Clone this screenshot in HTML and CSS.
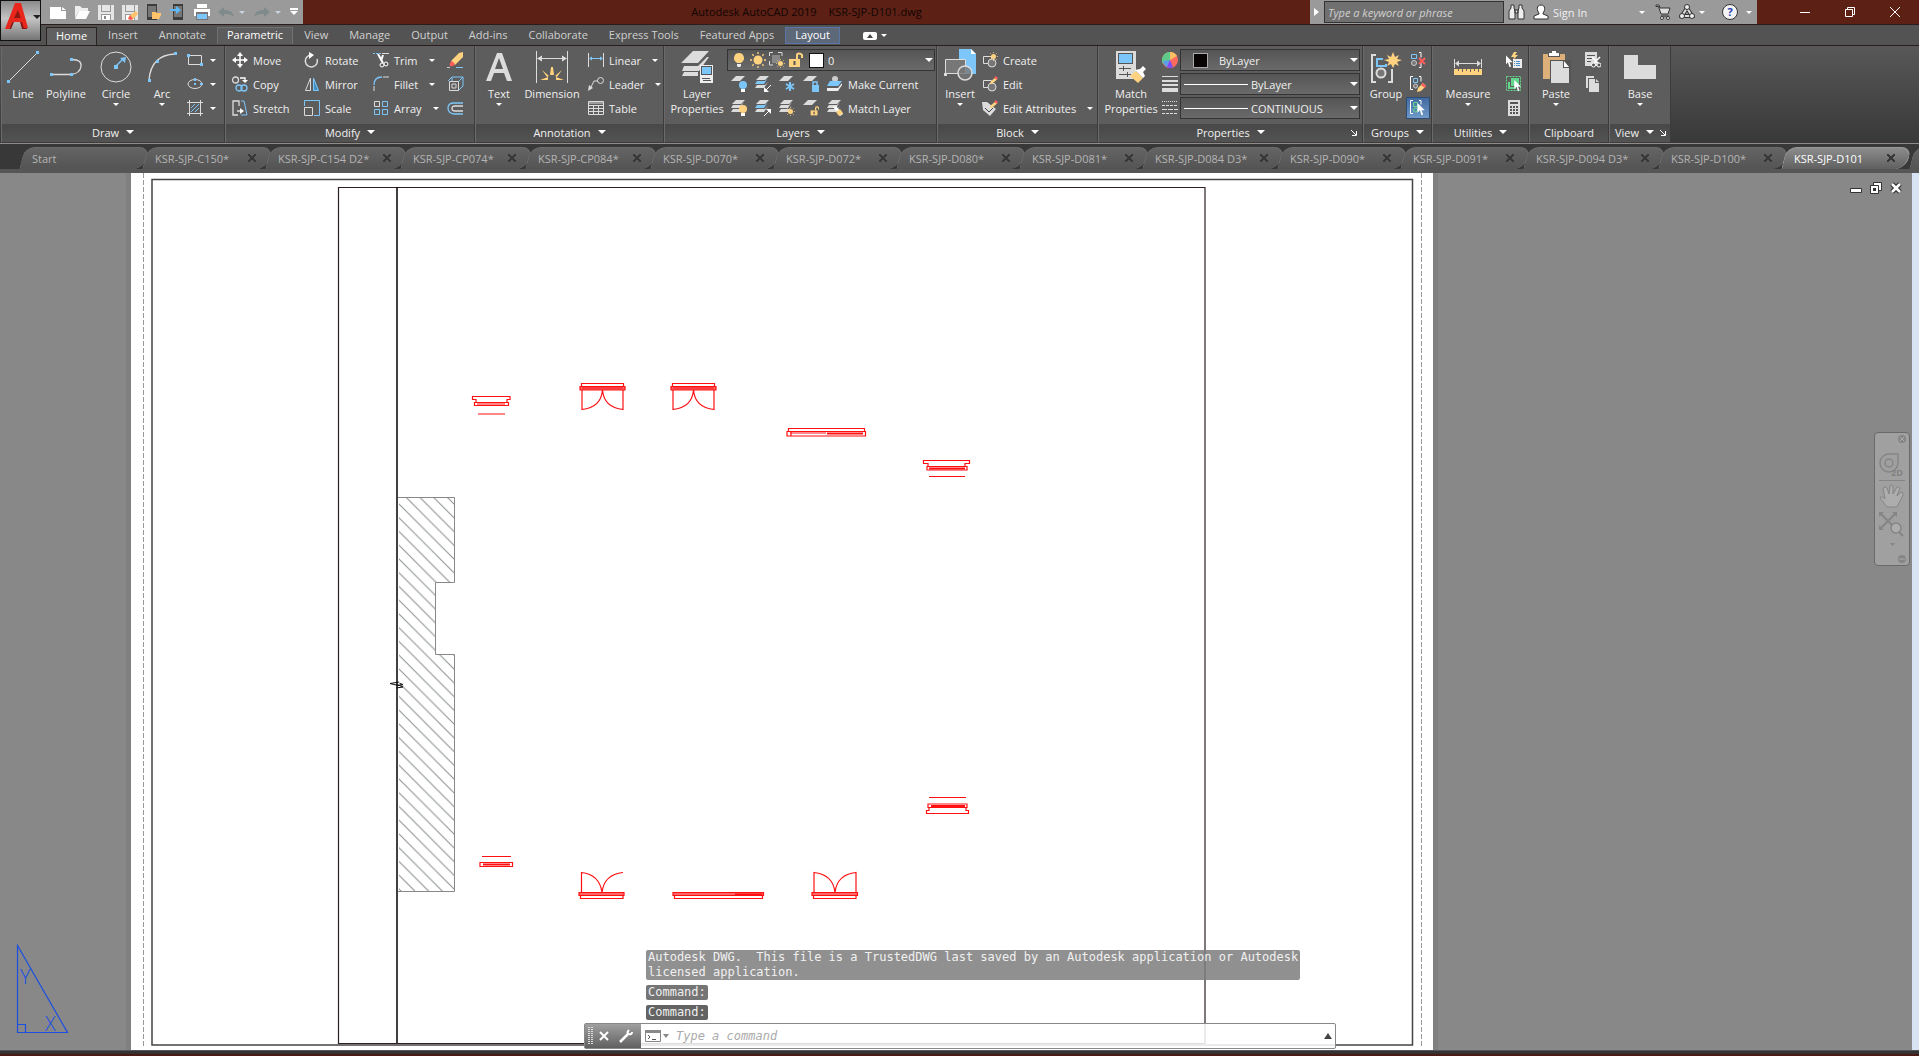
FILE: index.html
```html
<!DOCTYPE html>
<html lang="en">
<head>
  <meta charset="UTF-8">
  <title>Autodesk AutoCAD 2019 - KSR-SJP-D101.dwg</title>
  <meta name="viewport" content="width=device-width, initial-scale=1">
  <link rel="stylesheet" href="styles.css">
</head>
<body>
  <!-- shared icon parts -->
  <svg class="defs" aria-hidden="true">
    <symbol id="sheet" viewBox="0 0 16 16"><path fill="#dcdcdc" d="M5 1h9l-5 5H0z"/></symbol>
    <symbol id="stack" viewBox="0 0 16 16"><path fill="#dcdcdc" d="M5 0h9l-4 4H1zM2 5h8l3-3-4 6H0zM2 9h8l3-3-4 6H0z"/></symbol>
    <symbol id="stack-blue" viewBox="0 0 16 16"><path fill="#dcdcdc" d="M5 0h9l-4 4H1zM2 9h8l3-3-4 6H0z"/><path fill="#7cc6fa" d="M2 5h8l3-3-4 6H0z"/></symbol>
    <symbol id="sun" viewBox="0 0 16 16"><circle cx="8" cy="8" r="4.500" fill="#ffd27f"/><path stroke="#ffd27f" stroke-width="1.300" d="M8 0v2M8 14v2M0 8h2M14 8h2M2.300 2.300l1.400 1.400M12.300 12.300l1.400 1.400M2.300 13.700l1.400-1.400M12.300 3.700l1.400-1.400"/></symbol>
    <symbol id="bulb" viewBox="0 0 16 16"><path fill="#ffd27f" d="M8 1a5 5 0 0 1 3 9l-1 1H6l-1-1a5 5 0 0 1 3-9z"/><path fill="#eee" d="M6 12h4v2l-1 1H7l-1-1z"/></symbol>
    <symbol id="lock" viewBox="0 0 16 16"><path fill="#ffd27f" d="M1 7h11v8H1z"/><path fill="none" stroke="#ffd27f" stroke-width="2" d="M9 7V3q0-1.500 2-1.500T14 3v3"/><path fill="#555" d="M5.500 9h2v4h-2z"/></symbol>
    <symbol id="pencil" viewBox="0 0 16 16"><path fill="#ffd27f" d="M12 2l3 3-8 7-4 1 1-4z"/><path fill="#ff5c5c" d="M12 0l4 3-2 3-4-3z"/></symbol>
    <symbol id="cursor" viewBox="0 0 16 16"><path fill="#fff" d="M3 0v12l3-3 2 6 2-1-2-5h4z"/></symbol>
  </svg>

  <header class="titlebar">
    <button class="app-menu" aria-label="Application menu">
      <svg width="26" height="28" viewBox="0 0 26 28"><path fill="#8d1610" d="M4 26L14 2l8 24h-5l-2-7H9l-3 7z"/><path fill="#e8261c" d="M0 26L10 0h6l7 25h-4L13 7 9 15h7l1 4H7l-3 7z"/></svg>
      <span class="caret dark"></span>
    </button>
    <div class="quick">
      <button aria-label="New"><svg width="16" height="16"><path fill="#fff" d="M0 3h11v4h5v8H0zM12 3l4 3h-4z"/></svg></button>
      <button aria-label="Open"><svg width="16" height="16"><path fill="#eee" d="M1 14V2h5l2 2h6v3H5z"/><path fill="#fff" d="M5 7h11l-4 8H1z"/></svg></button>
      <button aria-label="Save"><svg width="16" height="16"><path fill="#e6e6e6" d="M0 1h16v15H0z"/><path fill="#999" d="M3 1h1v6h8V1h1v7H3zM3 10h10v6H3z"/><path fill="#fff" d="M4 11h8v5H4z"/><path fill="#888" d="M6 12h2v3H6z"/></svg></button>
      <button aria-label="Save As"><svg width="16" height="16"><path fill="#e6e6e6" d="M0 1h16v15H0z"/><path fill="#999" d="M3 1h1v6h8V1h1v7H3zM3 10h10v6H3z"/><path fill="#fff" d="M4 11h8v5H4z"/><path fill="#ffc46b" d="M14 7l2 3-6 6-4-1 1-3z"/><path fill="#f55" d="M8 11l3 4-2 1-3-1z"/></svg></button>
      <button aria-label="Open from mobile"><svg width="16" height="16"><path fill="#3c3c3c" d="M1 0h10v16H1z"/><path fill="#777" d="M2 2h8v11H2z"/><path fill="#ffc46b" d="M6 8h4l1 1h4v2l-2 4H6z"/></svg></button>
      <button aria-label="Save to mobile"><svg width="16" height="16"><path fill="#3c3c3c" d="M3 0h10v16H3z"/><path fill="#777" d="M4 2h8v11H4z"/><path fill="#5fb8f7" d="M0 5h6V2l5 4-5 4V7H0z"/></svg></button>
      <button aria-label="Plot"><svg width="16" height="16"><path fill="#fff" d="M3 0h10v4H3zM0 5h16v7H0z"/><path fill="#777" d="M2 8h12v8H2z"/><path fill="#7cc6fa" d="M3 10h10v5H3z"/></svg></button>
      <button aria-label="Undo"><svg width="16" height="16"><path fill="#7f8b8b" d="M0 8l6-5v3c6 0 9 2 10 7-3-3-6-3-10-3v3z"/></svg></button>
      <button class="slim" aria-label="Undo list"><span class="caret faint"></span></button>
      <button aria-label="Redo"><svg width="16" height="16"><path fill="#7f8b8b" d="M16 8l-6-5v3C4 6 1 8 0 13c3-3 6-3 10-3v3z"/></svg></button>
      <button class="slim" aria-label="Redo list"><span class="caret faint"></span></button>
      <button aria-label="Customize"><svg width="8" height="8"><path fill="#fff" d="M0 0h8v2H0zM0 3h8L4 7z"/></svg></button>
    </div>
    <div class="title"><span>Autodesk AutoCAD 2019</span><span>KSR-SJP-D101.dwg</span></div>
    <div class="infocenter">
      <button class="expand" aria-label="Collapse"><svg width="5" height="8"><path fill="#fff" d="M0 0l5 4-5 4z"/></svg></button>
      <input type="text" placeholder="Type a keyword or phrase" aria-label="Search">
      <button aria-label="Find"><svg width="17" height="16"><path fill="#eee" stroke="#333" d="M3 1h3v3l1 3v8H1V7l2-3zM11 1h3v3l2 3v8h-6V7l1-3zM7 6h3v3H7z"/></svg></button>
      <button class="signin"><svg width="16" height="16"><path fill="#fff" stroke="#333" d="M8 1c5 0 4 6 2 8v1l5 2v3H1v-3l5-2V9C4 7 3 1 8 1z"/></svg>Sign In<span class="caret"></span></button>
      <button aria-label="App store"><svg width="16" height="16"><path fill="#ddd" stroke="#333" d="M1 1h3l1 3h10l-2 6H6L3.500 2.500H1zM6 12h8"/><circle cx="7" cy="14" r="1.500" fill="#fff" stroke="#333"/><circle cx="13" cy="14" r="1.500" fill="#fff" stroke="#333"/></svg></button>
      <button class="pair" aria-label="Stay connected"><svg width="16" height="16"><path fill="none" stroke="#333" stroke-width="4" d="M8 4l5 8H3z"/><path fill="none" stroke="#ddd" stroke-width="2" d="M8 4l5 8H3z"/><g fill="#eee" stroke="#333"><circle cx="8" cy="3" r="2.500"/><circle cx="3" cy="12" r="2.500"/><circle cx="13" cy="12" r="2.500"/></g></svg><span class="caret"></span></button>
      <button class="pair help" aria-label="Help"><span class="help-mark">?</span><span class="caret"></span></button>
    </div>
    <div class="window-buttons">
      <button aria-label="Minimize"><svg width="10" height="10"><path stroke="#fff" d="M0 5.500h10"/></svg></button>
      <button aria-label="Restore"><svg width="10" height="10"><path fill="none" stroke="#fff" d="M.5 2.500h7v7h-7zM2.500 2V.500h7v7H8"/></svg></button>
      <button aria-label="Close"><svg width="10" height="10"><path stroke="#fff" d="M0 0l10 10M10 0L0 10"/></svg></button>
    </div>
  </header>

  <nav class="menu">
    <button class="menu-tab current">Home</button>
    <button class="menu-tab">Insert</button>
    <button class="menu-tab">Annotate</button>
    <button class="menu-tab outlined">Parametric</button>
    <button class="menu-tab">View</button>
    <button class="menu-tab">Manage</button>
    <button class="menu-tab">Output</button>
    <button class="menu-tab">Add-ins</button>
    <button class="menu-tab">Collaborate</button>
    <button class="menu-tab">Express Tools</button>
    <button class="menu-tab">Featured Apps</button>
    <button class="menu-tab context">Layout</button>
    <button class="ribbon-toggle" aria-label="Minimize ribbon"><svg width="14" height="8"><rect width="14" height="8" rx="2" fill="#fff"/><path fill="#444" d="M4 6l3-4 3 4z"/></svg><span class="caret"></span></button>
  </nav>

  <section class="ribbon">
    <div class="panel draw">
      <div class="panel-body">
        <button class="big"><svg width="32" height="32"><path stroke="#dcdcdc" d="M2 30L30 2"/><path fill="#7cc6fa" d="M0 29h3v3H0zM29 0h3v3h-3z"/></svg>Line</button>
        <button class="big"><svg width="32" height="32"><path fill="none" stroke="#dcdcdc" stroke-width="1.300" d="M2 23.500h19q9-1 10-8t-9-7"/><path fill="#7cc6fa" d="M0 22h3v3H0zM20 22h3v3h-3zM20 7h3v3h-3z"/></svg>Polyline</button>
        <button class="big wide"><svg width="32" height="32"><circle cx="16" cy="16" r="15" fill="none" stroke="#dcdcdc"/><path stroke="#7cc6fa" stroke-width="1.500" d="M16 15l8-8"/><path fill="#7cc6fa" d="M14 14h4v4h-4zM20 7l6-1-1 6z"/></svg>Circle<span class="caret"></span></button>
        <button class="big narrow"><svg width="32" height="32"><path fill="none" stroke="#dcdcdc" stroke-width="1.300" d="M3 29Q5 4 29 3"/><path fill="#7cc6fa" d="M2 28h3v3H2zM10 9h3v3h-3zM28 1h3v3h-3z"/></svg>Arc<span class="caret"></span></button>
        <div class="rows draw-more">
          <button class="tool" aria-label="Rectangle"><svg width="16" height="16"><path fill="none" stroke="#dcdcdc" d="M1.500 3.500h13v9h-13z"/><path fill="#7cc6fa" d="M0 2h3v3H0zM13 11h3v3h-3z"/></svg><span class="caret"></span></button>
          <button class="tool" aria-label="Ellipse"><svg width="16" height="16"><ellipse cx="8" cy="8" rx="7" ry="4.500" fill="none" stroke="#dcdcdc"/><path fill="#7cc6fa" d="M7 2h2v3H7zM13 7h3v2h-3zM7 7h2v2H7z"/></svg><span class="caret"></span></button>
          <button class="tool" aria-label="Hatch"><svg width="16" height="16"><path stroke="#dcdcdc" d="M2.500 0v16M13.500 0v16M0 2.500h16M0 13.500h16"/><path stroke="#7cc6fa" d="M4 8l4-4M4 12l8-8M8 12l4-4"/></svg><span class="caret"></span></button>
        </div>
      </div>
      <button class="panel-title">Draw<span class="caret large"></span></button>
    </div>

    <div class="panel modify">
      <div class="panel-body">
        <div class="rows col-a">
          <button class="tool"><svg width="16" height="16"><path stroke="#fff" stroke-width="1.500" d="M8 2v12M2 8h12"/><path fill="#fff" d="M8 0l3 4H5zM8 16l3-4H5zM0 8l4-3v6zM16 8l-4-3v6z"/></svg>Move</button>
          <button class="tool"><svg width="16" height="16"><g fill="none" stroke-width="1.300"><circle cx="3.500" cy="4" r="3" stroke="#dcdcdc"/><circle cx="7" cy="12" r="3" stroke="#7cc6fa"/><circle cx="12" cy="12" r="3" stroke="#7cc6fa"/><path stroke="#fff" d="M8 2h5v3"/></g><path fill="#fff" d="M10 4h6l-3 3z"/></svg>Copy</button>
          <button class="tool"><svg width="16" height="16"><path fill="none" stroke="#dcdcdc" stroke-width="1.300" d="M6 15H1V1h6v5M5 11h5"/><path fill="#fff" d="M8 8l4 3-4 3z"/><path fill="none" stroke="#7cc6fa" d="M9 1h3l3 14H9"/></svg>Stretch</button>
        </div>
        <div class="rows col-b">
          <button class="tool"><svg width="16" height="16"><path fill="none" stroke="#dcdcdc" stroke-width="1.500" d="M7 3a6 6 0 1 0 6 4"/><path fill="#fff" d="M5 0l5 3-5 4z"/></svg>Rotate</button>
          <button class="tool"><svg width="16" height="16"><path fill="none" stroke="#dcdcdc" d="M6.500 2v12.500h-5z"/><path fill="#4790c2" stroke="#7cc6fa" d="M9.500 2v12.500h5z"/></svg>Mirror</button>
          <button class="tool"><svg width="16" height="16"><path fill="none" stroke="#7cc6fa" d="M.5 6V.500h15v15H10"/><path fill="none" stroke="#dcdcdc" d="M.5 7.500h8v8h-8z"/></svg>Scale</button>
        </div>
        <div class="rows col-c">
          <button class="tool"><svg width="16" height="16"><path stroke="#7cc6fa" stroke-dasharray="2 1" d="M0 1.500h8"/><path stroke="#dcdcdc" d="M9 1.500h7"/><path stroke="#fff" stroke-width="2" d="M5 2l5 9M10 3L8 9"/><g fill="none" stroke="#fff"><circle cx="9" cy="13" r="2"/><circle cx="13" cy="12" r="2"/></g></svg>Trim<span class="caret"></span></button>
          <button class="tool"><svg width="16" height="16"><path fill="none" stroke="#7cc6fa" stroke-width="1.300" d="M1 9q0-8 8-8"/><path stroke="#dcdcdc" d="M1 10v5M10 1h6"/></svg>Fillet<span class="caret"></span></button>
          <button class="tool"><svg width="16" height="16"><g fill="none" stroke="#7cc6fa"><path stroke="#dcdcdc" d="M1.500 1.500h5v5h-5z"/><path d="M9.500 1.500h5v5h-5zM1.500 9.500h5v5h-5zM9.500 9.500h5v5h-5z"/></g></svg>Array<span class="caret"></span></button>
        </div>
        <div class="rows">
          <button class="tool" aria-label="Erase"><svg width="17" height="16"><path fill="#ffd27f" d="M12 1l4-1v5L8 13l-4-4z"/><path fill="#ff5c5c" d="M5 9l3 3q-2 3-5 2-1-3 2-5z"/><path stroke="#7cc6fa" d="M9 15.500h7"/><path stroke="#ccc" d="M0 15.500h3"/></svg></button>
          <button class="tool" aria-label="Explode"><svg width="17" height="16"><path fill="none" stroke="#7cc6fa" d="M1 5l4-4h11v9l-4 4M12 5l4-4M5 1v4"/><path fill="none" stroke="#dcdcdc" d="M2.500 5.500h9v9h-9zM5 8h4v4H5z"/></svg></button>
          <button class="tool" aria-label="Offset"><svg width="17" height="16"><path fill="none" stroke="#7cc6fa" stroke-width="1.300" d="M16 3H7q-6 0-6 5t6 6h9"/><path fill="none" stroke="#dcdcdc" stroke-width="1.300" d="M16 6H8Q5 6 5 8.500T8 11h8"/></svg></button>
        </div>
      </div>
      <button class="panel-title">Modify<span class="caret large"></span></button>
    </div>

    <div class="panel annotation">
      <div class="panel-body">
        <button class="big"><svg width="32" height="32"><path fill="#dcdcdc" d="M14 2h5l10 28h-5l-3-8H11l-3 8H3zM12 18h8L16 7z"/></svg>Text<span class="caret"></span></button>
        <button class="big wide"><svg width="32" height="32"><path stroke="#dcdcdc" d="M.5 0v32M31.500 0v32M3 7.500h26"/><path fill="#dcdcdc" d="M1 7.500l5-3v6zM31 7.500l-5-3v6z"/><path fill="#ffd27f" d="M15 16h2l1 8h-4zM6 19l7 6-2 1zM26 19l-7 6 2 1zM4 29l8-3v3zM28 29l-8-3v3z"/></svg>Dimension</button>
        <div class="rows col-a">
          <button class="tool"><svg width="16" height="16"><path stroke="#dcdcdc" d="M.5 1v14M15.500 1v14"/><path stroke="#7cc6fa" d="M2 6.500h12"/><path fill="#7cc6fa" d="M1 6.500l3-2v4zM15 6.500l-3-2v4z"/></svg>Linear<span class="caret"></span></button>
          <button class="tool"><svg width="16" height="16"><path fill="none" stroke="#dcdcdc" d="M2 13l4-8h4"/><circle cx="12.500" cy="4.500" r="3" fill="none" stroke="#dcdcdc"/><path fill="#dcdcdc" d="M0 15l1-6 4 3z"/></svg>Leader<span class="caret"></span></button>
          <button class="tool"><svg width="16" height="16"><path fill="none" stroke="#dcdcdc" d="M.5 1.500h15v13H.500zM1 3h14M1 5.500h14M1 8.500h14M1 11.500h14M5.500 5v9M10.500 5v9"/></svg>Table</button>
        </div>
      </div>
      <button class="panel-title">Annotation<span class="caret large"></span></button>
    </div>

    <div class="panel layers">
      <div class="panel-body">
        <button class="big wide"><svg width="32" height="32"><path fill="#dcdcdc" d="M12 0h16L17 12H0zM3 15h14l9-9h2L18 20H1zM3 21h14v4H1z"/><path fill="#eee" d="M19 14h13v18H19z"/><path fill="#555" d="M20 15h11v9H20z"/><path fill="#7cc6fa" d="M21 16h9v7h-9z"/><path stroke="#555" d="M21 27.500h8M22 29.500h8"/></svg>Layer<br>Properties</button>
        <div class="rows">
          <div class="combo layer-combo">
            <select aria-label="Layer"><option>0</option></select>
            <div class="combo-icons">
              <svg width="16" height="16"><use href="#bulb"/></svg>
              <svg width="16" height="16"><use href="#sun"/></svg>
              <svg width="16" height="16"><path fill="none" stroke="#dcdcdc" d="M.5 4V.500H4M9 .5h4V4M.5 9v4H4"/><path fill="#888" d="M3 3h8v8H3z"/><use href="#sun" x="7" y="7" width="9" height="9"/></svg>
              <svg width="16" height="16"><use href="#lock"/></svg>
              <i class="swatch white"></i>
            </div>
          </div>
          <div class="icon-row">
            <button class="tool" aria-label="Layer off"><svg width="16" height="16"><use href="#sheet" y="-1"/><circle cx="12" cy="9" r="4" fill="#7cc6fa"/><path fill="#fff" d="M10 13h4v3h-4z"/></svg></button>
            <button class="tool" aria-label="Layer isolate"><svg width="16" height="16"><use href="#stack-blue"/><path stroke="#fff" d="M16 9l-5 5"/><path fill="#fff" d="M9 16v-5l5 5z"/></svg></button>
            <button class="tool" aria-label="Layer freeze"><svg width="16" height="16"><use href="#sheet" y="-1"/><path stroke="#7cc6fa" stroke-width="2" d="M11 6v9M7 8l8 5M15 8l-8 5"/></svg></button>
            <button class="tool" aria-label="Layer lock"><svg width="16" height="16"><use href="#sheet" y="-1"/><path fill="#7cc6fa" d="M9 9h7v7H9z"/><path fill="none" stroke="#7cc6fa" stroke-width="1.500" d="M10 9V6h4v3"/></svg></button>
            <button class="tool"><svg width="16" height="16"><circle cx="8" cy="3" r="3" fill="#ccc"/><path fill="#7cc6fa" d="M3 5h12l-4 5H0z"/><path fill="#eee" d="M0 12h11l4-5v2l-4 6H0z"/></svg>Make Current</button>
          </div>
          <div class="icon-row">
            <button class="tool" aria-label="Layers on"><svg width="16" height="16"><use href="#stack"/><circle cx="12" cy="9" r="4" fill="#ffd27f"/><path fill="#fff" d="M10 13h4v3h-4z"/></svg></button>
            <button class="tool" aria-label="Layer unisolate"><svg width="16" height="16"><use href="#stack-blue"/><path stroke="#fff" d="M9 16l5-5"/><path fill="#fff" d="M16 9v5l-5-5z"/></svg></button>
            <button class="tool" aria-label="Layers thaw"><svg width="16" height="16"><use href="#stack"/><use href="#sun" x="7" y="7" width="9" height="9"/></svg></button>
            <button class="tool" aria-label="Layer unlock"><svg width="16" height="16"><use href="#sheet" y="-1"/><use href="#lock" x="7" y="6" width="10" height="10"/></svg></button>
            <button class="tool"><svg width="16" height="16"><use href="#stack"/><path fill="#fff" d="M6 7l3-1 7 8-3 2z"/><path fill="#ffd27f" d="M9 12l4-3 3 4-4 3z"/></svg>Match Layer</button>
          </div>
        </div>
      </div>
      <button class="panel-title">Layers<span class="caret large"></span></button>
    </div>

    <div class="panel block">
      <div class="panel-body">
        <button class="big"><svg width="32" height="32"><path fill="#7cc6fa" d="M15-2h12l5 5v20H15z"/><path fill="#fff" d="M27-2l5 5h-5z"/><path fill="#777" stroke="#dcdcdc" d="M1.500 8.500h20v14h-20z"/><circle cx="21" cy="22" r="7" fill="#777" fill-opacity=".8" stroke="#dcdcdc" stroke-width="1.500"/><path fill="#dcdcdc" d="M0 22h3v3H0z"/></svg>Insert<span class="caret"></span></button>
        <div class="rows col-a">
          <button class="tool"><svg width="16" height="16"><path fill="none" stroke="#dcdcdc" d="M1.500 4.500h8v7h-8z"/><circle cx="10" cy="11" r="4" fill="#777" stroke="#dcdcdc"/><use href="#sun" x="7" y="0" width="9" height="9"/></svg>Create</button>
          <button class="tool"><svg width="16" height="16"><path fill="none" stroke="#dcdcdc" d="M1.500 4.500h8v7h-8z"/><circle cx="10" cy="11" r="4" fill="#777" stroke="#dcdcdc"/><use href="#pencil" x="6" y="0" width="10" height="10"/></svg>Edit</button>
          <button class="tool"><svg width="16" height="16"><path fill="#dcdcdc" d="M0 2h5l9 7-6 7-7-6z"/><path fill="none" stroke="#444" d="M3 8l4 4 4-4"/><use href="#pencil" x="6" y="0" width="10" height="10"/></svg>Edit Attributes<span class="caret"></span></button>
        </div>
      </div>
      <button class="panel-title">Block<span class="caret large"></span></button>
    </div>

    <div class="panel properties">
      <div class="panel-body">
        <button class="big wide"><svg width="32" height="32"><path fill="#dcdcdc" d="M1 0h20v28H1z"/><path fill="#555" d="M3 2h15v11H3z"/><path fill="#7cc6fa" d="M4 3h13v9H4z"/><path stroke="#555" d="M4 17.500h12M4 23.500h12M8.500 15v5M12.500 21v5"/><path fill="#ffd27f" d="M15 25l6-5 7 7-5 5z"/><path fill="#fff" d="M20 19l5-1 3-3 3 3-3 3 2 4-2 2z"/></svg>Match<br>Properties</button>
        <div class="rows prop-icons">
          <svg width="16" height="16"><circle cx="8" cy="8" r="8" fill="#ff6b5e"/><path fill="#f5c164" d="M8 8V0a8 8 0 0 1 7 4z"/><path fill="#5fc98a" d="M8 8L1 12A8 8 0 0 1 8 0z"/><path fill="#5c9fe8" d="M8 8l-7 1q1 5 4 6z"/><path fill="#7a4dff" d="M8 8l-3 7q3 2 6 0z"/></svg>
          <svg width="16" height="16"><path fill="#dcdcdc" d="M0 0h16v1H0zM0 4h16v2H0zM0 8h16v2H0zM0 12h16v4H0z"/></svg>
          <svg width="16" height="16"><path stroke="#dcdcdc" stroke-dasharray="1 1" d="M0 1.500h16"/><path stroke="#dcdcdc" stroke-dasharray="3 1" d="M0 5.500h16M0 13.500h16"/><path stroke="#dcdcdc" stroke-dasharray="5 1" d="M0 9.500h16"/></svg>
        </div>
        <div class="rows prop-combos">
          <div class="combo color"><select aria-label="Object color"><option>ByLayer</option></select><div class="combo-icons"><i class="swatch black"></i></div></div>
          <div class="combo"><select aria-label="Lineweight"><option>ByLayer</option></select><div class="combo-icons"><i class="stroke"></i></div></div>
          <div class="combo"><select aria-label="Linetype"><option>CONTINUOUS</option></select><div class="combo-icons"><i class="stroke"></i></div></div>
        </div>
      </div>
      <button class="panel-title">Properties<span class="caret large"></span><svg class="launcher" width="6" height="6"><path fill="none" stroke="#fff" d="M0 0l5 5M5.500 1v4.500H1"/></svg></button>
    </div>

    <div class="panel groups">
      <div class="panel-body">
        <button class="big"><svg width="32" height="32"><path fill="none" stroke="#dcdcdc" stroke-width="2" d="M6 4H2v27h4M18 31h4V18"/><circle cx="11" cy="22" r="4.500" fill="#777" stroke="#dcdcdc" stroke-width="2"/><path fill="none" stroke="#7cc6fa" stroke-width="2" d="M13 8H7v7h9v-2"/><path fill="#ffd27f" d="M23 1l2 5 4-2-2 4 5 1-5 2 2 4-4-2-2 4-2-4-4 2 2-4-5-2 5-1-2-4 4 2z"/></svg>Group</button>
        <div class="rows">
          <button class="tool" aria-label="Ungroup"><svg width="16" height="16"><path fill="none" stroke="#fff" d="M9 .5h2v5M9 15.500h2V11"/><path fill="none" stroke="#7cc6fa" d="M1.500 2.500h5v4h-5z"/><circle cx="4" cy="11" r="2.500" fill="#777" stroke="#ccc"/><path stroke="#ff5c5c" stroke-width="2" d="M9 6l6 6M15 6l-6 6"/></svg></button>
          <button class="tool" aria-label="Group edit"><svg width="16" height="16"><path fill="none" stroke="#fff" d="M3 .5H.500v13H3M9 .5h2v5"/><path fill="none" stroke="#7cc6fa" d="M3.500 2.500h4v4h-4z"/><circle cx="5.500" cy="10" r="2" fill="#777" stroke="#ccc"/><path fill="#ffd27f" d="M13 7l3 3-5 5-4 1 1-4z"/><path fill="#ff5c5c" d="M13 7l3 3-1 2-4-3z"/></svg></button>
          <button class="tool pressed" aria-label="Group selection"><svg width="16" height="16"><path fill="none" stroke="#fff" d="M3 .5H.500v13H3M9 .5h2v4"/><path fill="none" stroke="#65d68d" d="M3.500 2.500h4v4h-4z"/><circle cx="5.500" cy="10" r="2" fill="none" stroke="#65d68d"/><use href="#cursor" x="5" y="3" width="13" height="13"/></svg></button>
        </div>
      </div>
      <button class="panel-title">Groups<span class="caret large"></span></button>
    </div>

    <div class="panel utilities">
      <div class="panel-body">
        <button class="big"><svg width="32" height="32"><path stroke="#dcdcdc" d="M2.500 8v9M29.500 8v9M4 12.500h24"/><path fill="#dcdcdc" d="M3 12.500l4-3v6zM29 12.500l-4-3v6z"/><path fill="#ffd27f" d="M2 18h28v6H2z"/><path stroke="#665" d="M6.500 18v2M10.500 18v3M14.500 18v2M18.500 18v3M22.500 18v2M26.500 18v3"/></svg>Measure<span class="caret"></span></button>
        <div class="rows">
          <button class="tool" aria-label="Quick select"><svg width="16" height="16"><use href="#cursor" x="-3" y="3" width="13" height="13"/><path fill="#ffd27f" d="M8 0L5 5h3l-1 3 5-5H9l2-3z"/><path fill="#eee" d="M7 7h9v9H7z"/><path stroke="#4a90d0" stroke-dasharray="1 1 4" d="M8 9.500h7M8 11.500h7M8 13.500h7"/></svg></button>
          <button class="tool" aria-label="Select all"><svg width="16" height="16"><path fill="none" stroke="#65d68d" stroke-dasharray="2 1" d="M.5.500h14v14H.500z"/><path fill="#65d68d" d="M5 2h8v8H5zM2 6h2v5h6v2H2z"/><use href="#cursor" x="6" y="4" width="12" height="12"/></svg></button>
          <button class="tool" aria-label="Calculator"><svg width="16" height="16"><path fill="#dcdcdc" d="M2 0h12v16H2z"/><path stroke="#555" stroke-width="2" stroke-dasharray="2 1" d="M4 7h8M4 10h8M4 13h8"/><path fill="#555" d="M4 2h8v2H4z"/></svg></button>
        </div>
      </div>
      <button class="panel-title">Utilities<span class="caret large"></span></button>
    </div>

    <div class="panel clipboard">
      <div class="panel-body">
        <button class="big"><svg width="32" height="32"><path fill="#deb079" d="M3 3h22v25H3z"/><path fill="#555" d="M8 2h12v4H8zM10 9h21v23H10z"/><path fill="#fff" d="M9 2h3V0h4v2h3v3H9z"/><path fill="#dcdcdc" d="M11 10h12v7h6v15H11z"/><path fill="#fff" d="M24 10l5 6h-5z"/></svg>Paste<span class="caret"></span></button>
        <div class="rows">
          <button class="tool" aria-label="Cut"><svg width="16" height="16"><path fill="#dcdcdc" d="M0 0h12v14H0z"/><path stroke="#555" d="M2 3.500h8M2 6.500h5M2 9.500h4"/><path stroke="#fff" stroke-width="1.500" d="M7 5l7 7M15 5l-7 7"/><g fill="#555" stroke="#fff"><circle cx="8.500" cy="13" r="2"/><circle cx="14" cy="13" r="2"/></g></svg></button>
          <button class="tool" aria-label="Copy clip"><svg width="16" height="16"><path fill="#dcdcdc" d="M1 0h8v2H3v10H1zM4 3h6v4h4v9H4zM11 3l3 3h-3z"/></svg></button>
        </div>
      </div>
      <div class="panel-title">Clipboard</div>
    </div>

    <div class="panel view">
      <div class="panel-body">
        <button class="big"><svg width="32" height="32"><path fill="#dcdcdc" d="M0 4h14v10h18v14H0z"/></svg>Base<span class="caret"></span></button>
      </div>
      <button class="panel-title">View<span class="caret large"></span><svg class="launcher" width="6" height="6"><path fill="none" stroke="#fff" d="M0 0l5 5M5.500 1v4.500H1"/></svg></button>
    </div>
  </section>

  <nav class="files">
    <button class="file start">Start</button>
    <button class="file">KSR-SJP-C150*<i></i></button>
    <button class="file long">KSR-SJP-C154 D2*<i></i></button>
    <button class="file medium">KSR-SJP-CP074*<i></i></button>
    <button class="file medium">KSR-SJP-CP084*<i></i></button>
    <button class="file">KSR-SJP-D070*<i></i></button>
    <button class="file">KSR-SJP-D072*<i></i></button>
    <button class="file">KSR-SJP-D080*<i></i></button>
    <button class="file">KSR-SJP-D081*<i></i></button>
    <button class="file long">KSR-SJP-D084 D3*<i></i></button>
    <button class="file">KSR-SJP-D090*<i></i></button>
    <button class="file">KSR-SJP-D091*<i></i></button>
    <button class="file long">KSR-SJP-D094 D3*<i></i></button>
    <button class="file">KSR-SJP-D100*<i></i></button>
    <button class="file active">KSR-SJP-D101<i></i></button>
    <button class="file more" aria-label="New tab"></button>
  </nav>

  <main class="workspace">
    <svg class="drawing" viewBox="0 173 1919 877" preserveAspectRatio="xMinYMin meet">
      <defs>
        <pattern id="hatch" x="399" y="504" width="13.750" height="13.750" patternUnits="userSpaceOnUse">
          <path stroke="#8a8e8e" d="M-1-1l15.750 15.750M12.750-1l2 2M-1 12.750l2 2"/>
        </pattern>
        <g id="door" fill="none" stroke="#f11" stroke-width="1.200">
          <path d="M1.500 3.500V.500h42v3"/>
          <path fill="#f66" d="M0 3.500h45v3.500H0z"/>
          <path d="M2 5h41M2 7v19.500q19-2 20.500-19.500Q24 24.500 43 26.500V7"/>
        </g>
      </defs>
      <path fill="#808080" d="M126 173h5v877h-5zM1433 173h5v877h-5z"/>
      <path fill="#fff" d="M131 173h1302v877H131z"/>
      <path stroke="#999" stroke-dasharray="5 2" d="M143.500 173v875M1421.500 173v875"/>
      <path fill="none" stroke="#444" stroke-width="1.500" d="M152 179.500h1260.500V1045H152z"/>
      <path fill="none" stroke="#2c2020" stroke-width="1.200" d="M338.500 187.500h866.500v856H338.500z"/>
      <path stroke="#000" stroke-width="1.500" d="M397 187v856"/>
      <path fill="url(#hatch)" d="M399 497.500h55.500v85h-19v72h19V892H399z"/>
      <path fill="none" stroke="#888" d="M398 497.500h56.500v85h-19v72h19v237H398"/>
      <path fill="none" stroke="#111" d="M399 682l-9 1.500 8 2 5-1-3-1M396 688l7-1-7-3"/>

      <!-- openings, north side -->
      <g fill="none" stroke="#f11" stroke-width="1.200">
        <path d="M476 402.500v-3h-3.500v-3H510v3h-3v3M474.500 402.500h34v3h-34zM477 404h28M478 414h27"/>
        <path d="M788.500 431.500v-3h76v3M787 431.500h78.500v4.500H787zM790 433h36M791 431v5"/>
        <path stroke-width="2" d="M827 433.500h36"/>
        <path d="M928 466.500v-3h-4.500v-3h46v3H965v3M927 466.500h40v3.500h-40zM929 476.500h36"/>
        <path stroke-width="2" d="M929 468.500h36"/>
      </g>
      <use href="#door" x="580" y="383"/>
      <use href="#door" x="671" y="383"/>

      <!-- openings, south side -->
      <g fill="none" stroke="#f11" stroke-width="1.200">
        <path d="M929 797.500h37M928 804h39v3.500h-39zM929 808v2.500h-2.500v3h42v-3H966V808"/>
        <path stroke-width="2" d="M931 806h34M483 864.500h27"/>
        <path d="M482 856.500h29M480 862.500h32.500v4H480z"/>
        <path d="M581.500 892.500v-20q18 2 20.500 20 2-18 21-20M580.500 895.500v3H623v-3"/>
        <path fill="#f66" d="M579 892.500h45v3h-45zM673 892.500h90.500v3H673zM812 892.500h45.500v3H812z"/>
        <path d="M674.500 895.500v3h88v-3M813.500 895.500v3H856v-3M814 892.500v-20q19 2 21 20 2-18 21-20v20"/>
        <path stroke-width="2" d="M735 894.500h27"/>
      </g>

      <g class="ucs">
        <path fill="none" stroke="#1c4fe0" stroke-width="1.200" d="M17.500 945.500v87h50zM17.500 1024.500h8v8"/>
        <text x="20" y="984">Y</text>
        <text x="45" y="1031">X</text>
      </g>
    </svg>

    <div class="doc-buttons">
      <button aria-label="Minimize drawing"><svg width="14" height="14"><path fill="#fff" stroke="#333" d="M1.500 7.500h11v4h-11z"/></svg></button>
      <button aria-label="Restore drawing"><svg width="14" height="14"><path fill="#fff" stroke="#333" d="M4.500 1.500h8v8h-8z"/><path fill="#fff" stroke="#333" d="M1.500 4.500h8v8h-8z"/><path fill="#333" d="M4 7h3v3H4z"/></svg></button>
      <button aria-label="Close drawing"><svg width="14" height="14"><path stroke="#333" stroke-width="5" d="M3 3l8 8M11 3l-8 8"/><path stroke="#fff" stroke-width="2.500" d="M3 3l8 8M11 3l-8 8"/></svg></button>
    </div>

    <div class="navbar">
      <svg width="34" height="132">
        <circle cx="27" cy="6" r="4" fill="#858585"/><path stroke="#aaa" d="M25 4l4 4M29 4l-4 4"/>
        <g fill="none" stroke="#858585"><path stroke-width="1.500" d="M15 21h8v9a9 9 0 1 1-8-9z"/><circle cx="14" cy="30" r="4" stroke-width="1.500"/><path d="M4 47.500h26"/></g>
        <text x="16" y="43">2D</text>
        <path fill="#adadad" stroke="#858585" d="M12 74l-7-9q1-3 5 1L8 55q2-2 4 0l2 6 1-8q2-2 3 0v8l4-7q2-1 3 1l-3 8 4-4q3 0 2 3l-6 12z"/>
        <path stroke="#858585" stroke-width="2" d="M6 81l14 14M20 81L6 95M23 98l5 5"/>
        <path fill="#858585" d="M4 79h5l-5 5zM22 79h-5l5 5zM4 97h5l-5-5z"/>
        <circle cx="21" cy="95" r="5" fill="#adadad" stroke="#858585" stroke-width="1.500"/>
        <path fill="#858585" d="M15 110h5l-2.500 3z"/><circle cx="27" cy="126" r="4" fill="#858585"/><path stroke="#aaa" d="M24 126h6"/>
      </svg>
    </div>

    <div class="command">
      <div class="history">
        <p class="old">Autodesk DWG.&nbsp; This file is a TrustedDWG last saved by an Autodesk application or Autodesk<br>licensed application.</p>
        <p>Command:</p>
        <p class="recent">Command:</p>
      </div>
      <div class="command-line">
        <div class="handle">
          <svg width="5" height="18"><path stroke="#ddd" stroke-width="2" stroke-dasharray="1 1" d="M1 0v18M4 0v18"/></svg>
          <button aria-label="Close command line"><svg width="10" height="10"><path stroke="#fff" stroke-width="2" d="M1 1l8 8M9 1L1 9"/></svg></button>
          <button aria-label="Customize command line"><svg width="14" height="14"><path stroke="#fff" stroke-width="2.500" d="M1 13l8-8"/><path fill="none" stroke="#fff" stroke-width="2" d="M10 1q-3 3 0 4t3-2"/></svg></button>
        </div>
        <button class="recent-commands" aria-label="Recent commands"><svg width="24" height="13"><path fill="#fff" stroke="#888" d="M.5.500h15v11H.500z"/><path fill="#888" d="M0 0h16v3H0zM18 4h6l-3 4z"/><path fill="none" stroke="#555" d="M3 5l2 2-2 2M7 9.500h4"/></svg></button>
        <input type="text" placeholder="Type a command" aria-label="Command">
        <button class="expand-history" aria-label="Show history"><svg width="8" height="6"><path fill="#444" d="M4 0l4 6H0z"/></svg></button>
      </div>
    </div>
  </main>
  <footer class="statusbar"></footer>
</body>
</html>
```
FILE: styles.css
```css
* { box-sizing: border-box; }
body {
  margin: 0;
  height: 100vh;
  overflow: hidden;
  display: flex;
  flex-direction: column;
  position: relative;
  font-family: "Open Sans", "Noto Sans", sans-serif;
  font-size: 11px;
  color: #f0f0f0;
  background: #3a3a3a;
}
button, input, select { font: inherit; color: inherit; }
button {
  margin: 0;
  padding: 0;
  border: 0;
  background: none;
  white-space: nowrap;
}
svg { display: block; flex: none; }
.defs { position: absolute; width: 0; height: 0; }
.caret {
  flex: none;
  border: 3px solid transparent;
  border-top: 3px solid #fff;
  border-bottom: 0;
}
.caret.large { border-width: 4px 4px 0; }
.caret.dark { border-top-color: #222; border-width: 4px 4px 0; }
.caret.faint { border-top-color: #ccd4e0; }

/* title bar */
.titlebar {
  flex: none;
  display: flex;
  height: 24px;
  background: #5c2015;
}
.app-menu {
  position: absolute;
  z-index: 2;
  left: 0;
  top: 0;
  width: 41px;
  height: 41px;
  display: flex;
  align-items: center;
  gap: 2px;
  padding: 0 2px 8px 4px;
  border: 1px solid #111;
  background: linear-gradient(#8a8a8a, #c4c4c4 45%, #757575);
}
.quick {
  display: flex;
  align-items: center;
  gap: 8px;
  margin-left: 41px;
  padding: 0 5px 0 9px;
  background: #9a9a9a;
}
.quick .slim { width: 8px; margin: 0 -4px; display: flex; justify-content: center; }
.quick .slim + button { margin-left: 4px; }
.title {
  flex: 1;
  display: flex;
  justify-content: center;
  align-items: center;
  gap: 12px;
  padding-bottom: 1px;
  color: #120504;
}
.infocenter {
  display: flex;
  align-items: center;
  gap: 8px;
  width: 447px;
  padding-right: 5px;
  background: #9a9a9a;
}
.infocenter .expand { width: 14px; padding-left: 4px; margin-right: -8px; }
.infocenter input {
  width: 180px;
  height: 22px;
  padding: 0 3px;
  border: 1px solid #333;
  background: #707070;
  font-style: italic;
  margin-right: -4px;
}
.infocenter input::placeholder { color: #d0d0d0; }
.signin { display: flex; align-items: center; flex: 1; gap: 4px; }
.signin .caret { margin-left: auto; margin-right: 2px; }
.pair { display: flex; align-items: center; gap: 4px; }
.help { margin-left: 9px; gap: 8px; }
.help-mark {
  width: 16px;
  height: 16px;
  border: 1px solid #333;
  border-radius: 50%;
  background: #f4f4f4;
  color: #2440b0;
  font-weight: 700;
  line-height: 14px;
}
.window-buttons { display: flex; margin: 0 2px 0 25px; }
.window-buttons button {
  width: 45px;
  display: flex;
  align-items: center;
  justify-content: center;
}

/* ribbon tabs */
.menu {
  flex: none;
  display: flex;
  align-items: flex-end;
  height: 21px;
  padding: 0 0 1px 46px;
  border-top: 1px solid #2a1d1b;
  background: #535353;
}
.menu-tab {
  height: 17px;
  margin-right: 1px;
  padding: 0 9px 1px;
  border: 1px solid transparent;
  line-height: 14px;
  color: #d0d0d0;
}
.menu-tab.current {
  height: 18px;
  margin-bottom: -1px;
  padding-bottom: 2px;
  color: #fff;
  border-color: #2a2220;
  border-bottom: 0;
  background: #606060;
}
.menu-tab.outlined { color: #fff; background: #5c5c5c; border-color: #707070; border-bottom: 0; padding-bottom: 2px; }
.menu-tab.context { color: #fff; background: #5d6878; border-color: #5a76a8; }
.ribbon-toggle { display: flex; align-items: center; gap: 4px; height: 17px; margin-left: 22px; }

/* ribbon */
.ribbon {
  flex: none;
  display: flex;
  height: 99px;
  padding-left: 1px;
  border-top: 1px solid #2a1d1b;
  border-bottom: 1px solid #908a88;
  background: linear-gradient(#585858, #383838);
}
.panel {
  flex: none;
  display: flex;
  flex-direction: column;
  border: solid #3c3c3c;
  border-width: 0 1px 1px 0;
  border-left: 1px solid #6a6a6a;
  background: #5d5d5d;
}
.panel-body { flex: 1; display: flex; padding: 2px 0 0 4px; }
.panel-title {
  height: 18px;
  width: 100%;
  display: flex;
  align-items: center;
  justify-content: center;
  gap: 7px;
  padding-bottom: 2px;
  position: relative;
  background: linear-gradient(#484848, #535353);
}
.launcher { position: absolute; right: 5px; bottom: 6px; }
.big {
  display: flex;
  flex-direction: column;
  align-items: center;
  width: 44px;
  padding-top: 3px;
  line-height: 15px;
}
.big svg { margin-bottom: 3px; overflow: visible; }
.big .caret { margin-top: 2px; }
.big.wide { width: 56px; }
.big.narrow { width: 36px; }
.rows { display: flex; flex-direction: column; }
.tool {
  display: flex;
  align-items: center;
  gap: 5px;
  height: 24px;
}
.tool .caret { margin-left: 6px; }
.tool.pressed {
  width: 24px;
  height: 22px;
  padding-left: 3px;
  margin: 1px 0 0 -4px;
  border: 1px solid #2d4c73;
  background: linear-gradient(#426aa0, #6f9ac9);
}
.icon-row { display: flex; gap: 8px; padding-left: 4px; }

.draw { width: 224px; }
.draw .panel-body { padding-left: 0; }
.draw .big:first-child { width: 42px; }
.draw-more { margin-left: 7px; }
.draw-more .caret { margin-left: 2px; }
.modify { width: 250px; }
.modify .panel-body { padding-left: 6px; }
.modify .col-a { width: 72px; }
.modify .col-b { width: 69px; }
.modify .col-c { width: 74px; }
.annotation { width: 189px; }
.annotation .panel-body { padding-left: 1px; }
.annotation .wide { width: 62px; }
.annotation .col-a { margin-left: 5px; }
.layers { width: 273px; }
.layers .wide { margin-right: 2px; }
.block { width: 161px; }
.block .panel-body { padding-left: 0; }
.properties { width: 265px; }
.prop-icons { gap: 8px; padding: 4px 2px 0 3px; }
.groups { width: 69px; }
.groups .panel-body { padding-left: 0; }
.groups .big { margin-right: 2px; }
.utilities { width: 97px; }
.utilities .big { width: 62px; margin-right: 7px; }
.clipboard { width: 80px; }
.clipboard .big { margin-right: 7px; }
.view { width: 62px; }
.view .big { width: 52px; }
.view .panel-title { justify-content: flex-start; padding-left: 5px; }
.view .launcher { right: 4px; }

.combo { position: relative; width: 180px; height: 22px; margin: 1px 0; }
.combo select {
  appearance: none;
  width: 100%;
  height: 22px;
  padding: 0 16px 0 70px;
  border: 1px solid #333;
  border-radius: 0;
  background: linear-gradient(#555, #6a6a6a);
}
.combo::after {
  content: "";
  position: absolute;
  right: 2px;
  top: 9px;
  border: 4px solid transparent;
  border-top-color: #fff;
  border-bottom: 0;
}
.combo-icons {
  position: absolute;
  left: 4px;
  top: 0;
  height: 22px;
  display: flex;
  align-items: center;
  gap: 3px;
  pointer-events: none;
}
.combo.color select { padding-left: 38px; }
.combo.color .combo-icons { left: 13px; }
.combo.layer-combo { width: 208px; }
.layer-combo select { padding-left: 100px; }
.layer-combo .swatch { margin-left: 2px; }
.swatch { width: 15px; height: 15px; border: 1px solid #111; }
.swatch.white { background: #fff; }
.swatch.black { background: #080404; border-color: #aaa; }
.stroke { width: 64px; height: 1px; background: #fff; }

/* open file tabs */
.files {
  flex: none;
  display: flex;
  height: 29px;
  padding: 3px 0 0 22px;
  background: linear-gradient(#383838 25px, #565656 25px);
  overflow: hidden;
}
.file {
  flex: none;
  width: 123px;
  height: 22px;
  display: flex;
  align-items: center;
  justify-content: space-between;
  padding: 0 12px 0 10px;
  position: relative;
  z-index: 0;
  color: #b4b4b4;
  text-align: left;
}
.file::before {
  content: "";
  position: absolute;
  z-index: -1;
  inset: 0 -2px 0 0;
  border-radius: 10px 10px 12px 0;
  border: solid #6c6c6c;
  border-width: 1px 1px 0;
  background: linear-gradient(#646464, #545454);
  transform: skewX(-14deg);
}
.file.medium { width: 125px; }
.file.long { width: 135px; }
.file i {
  width: 8px;
  height: 8px;
  background:
    linear-gradient(45deg, transparent 42%, #383838 42% 58%, transparent 58%),
    linear-gradient(-45deg, transparent 42%, #383838 42% 58%, transparent 58%);
}
.file.active { color: #fff; }
.file.active::before { background: linear-gradient(#8c8c8c, #606060); border-color: #999; }
.file.more { width: 30px; margin-left: 5px; }

/* drawing area */
.workspace {
  flex: 1;
  min-height: 0;
  position: relative;
  background: #888;
  border-right: 7px solid #d8e4f4;
}
.drawing { position: absolute; left: 0; top: 0; width: 100vw; height: 100%; clip-path: inset(0 7px 0 0); }
.ucs text { font-size: 20px; fill: #1c4fe0; font-weight: 300; }
.doc-buttons { position: absolute; right: 9px; top: 8px; display: flex; gap: 6px; }
.navbar {
  position: absolute;
  right: 2px;
  top: 259px;
  border: 1px solid #6a6a6a;
  border-radius: 4px;
  background: #a0a0a0;
}
.navbar text { font-size: 9px; font-weight: 700; fill: #808080; }

/* command window */
.command {
  position: absolute;
  left: 584px;
  bottom: 1px;
  width: 752px;
  font-family: "DejaVu Sans Mono", "Liberation Mono", monospace;
  font-size: 12px;
  line-height: 15px;
}
.history {
  display: flex;
  flex-direction: column;
  align-items: flex-start;
  gap: 5px;
  padding: 0 0 3px 62px;
}
.history p { margin: 0; padding: 0 2px; border-radius: 2px; white-space: nowrap; background: #757575; }
.history .old { background: rgba(125, 125, 125, .85); }
.history .recent { background: #636363; }
.command-line {
  display: flex;
  align-items: center;
  height: 26px;
  border: 1px solid #888;
  border-radius: 2px;
  background: rgba(255, 255, 255, .85);
}
.handle {
  display: flex;
  align-items: center;
  gap: 8px;
  width: 56px;
  height: 100%;
  padding-left: 3px;
  background: linear-gradient(#a0a0a0, #606060);
}
.handle svg { margin-right: -2px; }
.handle button:last-child { margin-left: 4px; }
.recent-commands { margin-left: 4px; }
.command-line input {
  flex: 1;
  border: 0;
  outline: 0;
  padding: 0 7px;
  background: none;
  color: #333;
  font-style: italic;
}
.command-line input::placeholder { color: #aaa; }
.expand-history { padding: 0 3px; }

.statusbar { flex: none; height: 6px; background: linear-gradient(#555 1px, #333 1px 4px, #4a1a14 4px); }
```
